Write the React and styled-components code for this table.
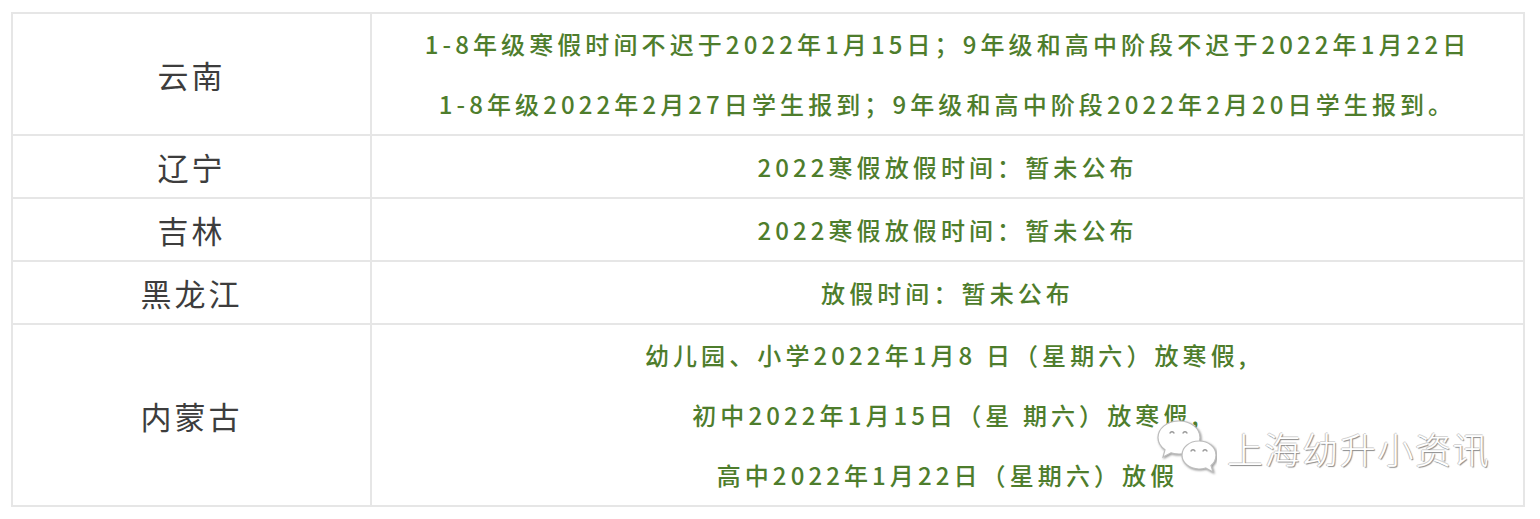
import styled, { createGlobalStyle } from "styled-components"

const GlobalStyle = createGlobalStyle`
  html, body {
    margin: 0;
    padding: 0;
    background: #ffffff;
    font-family: "Noto Sans CJK SC", "Noto Sans", sans-serif;
  }
`;

const Page = styled.div`
  position: relative;
  width: 1540px;
  height: 519px;
  padding: 12px 0 0 11px;
  box-sizing: border-box;
`;

const Table = styled.table`
  width: 1514px;
  border-collapse: collapse;
  table-layout: fixed;
`;

const Cell = styled.td`
  border: 2px solid #e6e6e6;
  padding: 0;
  text-align: center;
  vertical-align: middle;
`;

const Province = styled(Cell)`
  width: 357px;
  color: #3d3d3d;
  font-size: 31px;
  letter-spacing: 3px;
  font-weight: 400;
`;

const Info = styled(Cell)`
  color: #4e7d2c;
  font-size: 24px;
  font-weight: 500;
  letter-spacing: 4.1px;
`;

const Line = styled.p`
  margin: 0;
  line-height: ${(p) => p.$lh || 60}px;
  white-space: pre;
`;

const Watermark = styled.div`
  position: absolute;
  left: 1155px;
  top: 419px;
  display: flex;
  align-items: center;
  gap: 10px;
  pointer-events: none;
`;

const MarkText = styled.span`
  font-size: 36px;
  font-weight: 300;
  color: #ffffff;
  letter-spacing: 1.6px;
  text-shadow:
    1px 1px 1px #8a8a8a,
    -1px 0 0 #c9c9c9,
    0 -1px 0 #d5d5d5;
`;

const WeChat = () => (
  <svg width="62" height="58" viewBox="0 0 62 58">
    <defs>
      <filter id="emb" x="-20%" y="-20%" width="140%" height="140%">
        <feDropShadow dx="1" dy="1" stdDeviation="0.8" floodColor="#777" floodOpacity="0.8" />
      </filter>
    </defs>
    <g filter="url(#emb)" fill="#ffffff" stroke="#bdbdbd" strokeWidth="1.2">
      <path d="M24 2 C12 2 3 9.5 3 18.5 C3 23.5 5.8 27.8 10 30.8 L8 38 L16 33.8 C18.5 34.5 21 35 24 35 C36 35 45 27.5 45 18.5 C45 9.5 36 2 24 2 Z" />
      <path d="M44 22 C34 22 27 28.5 27 36 C27 43.5 34 50 44 50 C46.5 50 48.6 49.6 50.6 49 L58 53 L56 46.4 C59.5 43.8 61 40 61 36 C61 28.5 54 22 44 22 Z" />
    </g>
    <g fill="none" stroke="#9a9a9a" strokeWidth="1.3" strokeLinecap="round">
      <path d="M15 14 Q17 11.5 19 14" />
      <path d="M28 14 Q30 11.5 32 14" />
      <path d="M36 32 Q38 29.5 40 32" />
      <path d="M48 32 Q50 29.5 52 32" />
    </g>
  </svg>
);

const rows = [
  {
    name: "云南",
    lines: [
      "1-8年级寒假时间不迟于2022年1月15日；9年级和高中阶段不迟于2022年1月22日",
      "1-8年级2022年2月27日学生报到；9年级和高中阶段2022年2月20日学生报到。",
    ],
  },
  { name: "辽宁", lines: ["2022寒假放假时间：暂未公布"], lh: 61 },
  { name: "吉林", lines: ["2022寒假放假时间：暂未公布"], lh: 61 },
  { name: "黑龙江", lines: ["放假时间：暂未公布"], lh: 61 },
  {
    name: "内蒙古",
    lines: [
      "幼儿园、小学2022年1月8 日（星期六）放寒假,",
      "初中2022年1月15日（星 期六）放寒假,",
      "高中2022年1月22日（星期六）放假",
    ],
    lh: 60,
  },
];

const App = () => {
  return (
    <Page>
      <GlobalStyle />
      <Table>
        <tbody>
          {rows.map((r) => (
            <tr key={r.name}>
              <Province>{r.name}</Province>
              <Info>
                {r.lines.map((l) => (
                  <Line key={l} $lh={r.lh}>{l}</Line>
                ))}
              </Info>
            </tr>
          ))}
        </tbody>
      </Table>
      <Watermark>
        <WeChat />
        <MarkText>上海幼升小资讯</MarkText>
      </Watermark>
    </Page>
  )
}

export default App
